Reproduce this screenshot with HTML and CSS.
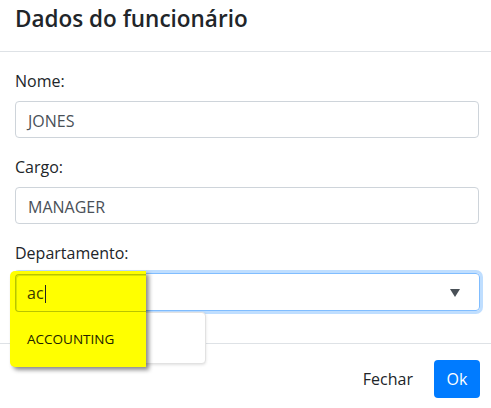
FILE: index.html
```html
<!DOCTYPE html>
<html lang="pt">
<head>
<meta charset="utf-8">
<link rel="stylesheet" href="styles.css">
</head>
<body>
<div class="modal">
  <div class="modal-header">
    <h4 class="modal-title">Dados do funcionário</h4>
  </div>
  <div class="modal-body">
    <div class="form-group">
      <label class="label">Nome:</label>
      <div class="input">JONES</div>
    </div>
    <div class="form-group">
      <label class="label">Cargo:</label>
      <div class="input">MANAGER</div>
    </div>
    <div class="form-group last">
      <label class="label">Departamento:</label>
      <div class="select-wrap">
        <div class="select">
          <svg class="caret" width="10" height="8" viewBox="0 0 10 8"><path d="M0 0H10L5 8Z" fill="#495057"/></svg>
        </div>
        <div class="menu-behind"></div>
        <div class="menu">
          <div class="search"><span>ac</span><span class="cursor"></span></div>
          <div class="item">ACCOUNTING</div>
        </div>
      </div>
    </div>
  </div>
  <div class="modal-footer">
    <button class="btn btn-link">Fechar</button>
    <button class="btn btn-primary">Ok</button>
  </div>
</div>
</body>
</html>
```
FILE: styles.css
```css
html, body {
  margin: 0;
  padding: 0;
  background: #fff;
}
body {
  font-family: "Open Sans", "Noto Sans", sans-serif;
  color: #212529;
  font-size: 16px;
  line-height: 1.5;
}
.modal {
  width: 491px;
}
.modal-header {
  box-sizing: border-box;
  height: 52px;
  padding: 5px 15px 0;
  border-bottom: 1px solid #dee2e6;
}
.modal-title {
  margin: 0;
  font-size: 22.5px;
  font-weight: 600;
  line-height: 1.2;
  color: #212529;
}
.modal-body {
  padding: 17px 12px 16px 15px;
}
.form-group {
  margin-bottom: 17px;
}
.form-group.last {
  margin-bottom: 16px;
}
.label {
  display: block;
  margin-bottom: 8px;
}
.input {
  box-sizing: border-box;
  height: 37px;
  padding: 7px 12px 0;
  border: 1px solid #ced4da;
  border-radius: 4px;
  color: #495057;
}
.select-wrap {
  position: relative;
}
.select {
  box-sizing: border-box;
  height: 38px;
  margin-right: -1px;
  border: 1px solid #80bdff;
  border-radius: 4px;
  box-shadow: 0 0 0 3px rgba(0, 123, 255, 0.25);
  display: flex;
  align-items: center;
  justify-content: flex-end;
  padding-right: 19px;
}
.caret {
  display: block;
  margin-top: 1px;
}
.menu-behind {
  position: absolute;
  left: 0;
  top: 39px;
  width: 191px;
  height: 52px;
  box-sizing: border-box;
  background: #fff;
  border: 1px solid #e2e2e2;
  border-radius: 4px;
  box-shadow: 0 1px 3px rgba(0, 0, 0, 0.12);
}
.menu {
  position: absolute;
  left: -5px;
  top: -2px;
  width: 136px;
  height: 96px;
  background: #ffff00;
  border-radius: 5px 0 0 5px;
  box-shadow: 3px 3px 4px rgba(0, 0, 0, 0.45);
  padding: 3px 0 0 5px;
  box-sizing: border-box;
}
.search {
  box-sizing: border-box;
  height: 38px;
  border: 1px solid #b9c400;
  border-right: none;
  border-radius: 4px 0 0 4px;
  box-shadow: inset 1px 1px 0 #d8e400;
  padding: 6px 0 0 11px;
  color: #3a3a00;
  display: flex;
  align-items: flex-start;
}
.cursor {
  display: inline-block;
  width: 1px;
  height: 18px;
  background: #222;
  margin-top: 4px;
  margin-left: 1px;
}
.item {
  padding: 17px 0 0 12px;
  font-size: 13.5px;
  color: #222200;
}
.modal-footer {
  border-top: 1px solid #dee2e6;
  padding: 16px 11px 0 0;
  display: flex;
  justify-content: flex-end;
  align-items: center;
  gap: 8px;
}
.btn {
  font-family: inherit;
  font-size: 16px;
  line-height: 1.5;
  height: 38px;
  border-radius: 4px;
  border: 1px solid transparent;
  padding: 0 12px;
  cursor: pointer;
}
.btn-link {
  background: transparent;
  color: #212529;
}
.btn-primary {
  background: #007bff;
  color: #fff;
  width: 46px;
  padding: 0;
}
```
